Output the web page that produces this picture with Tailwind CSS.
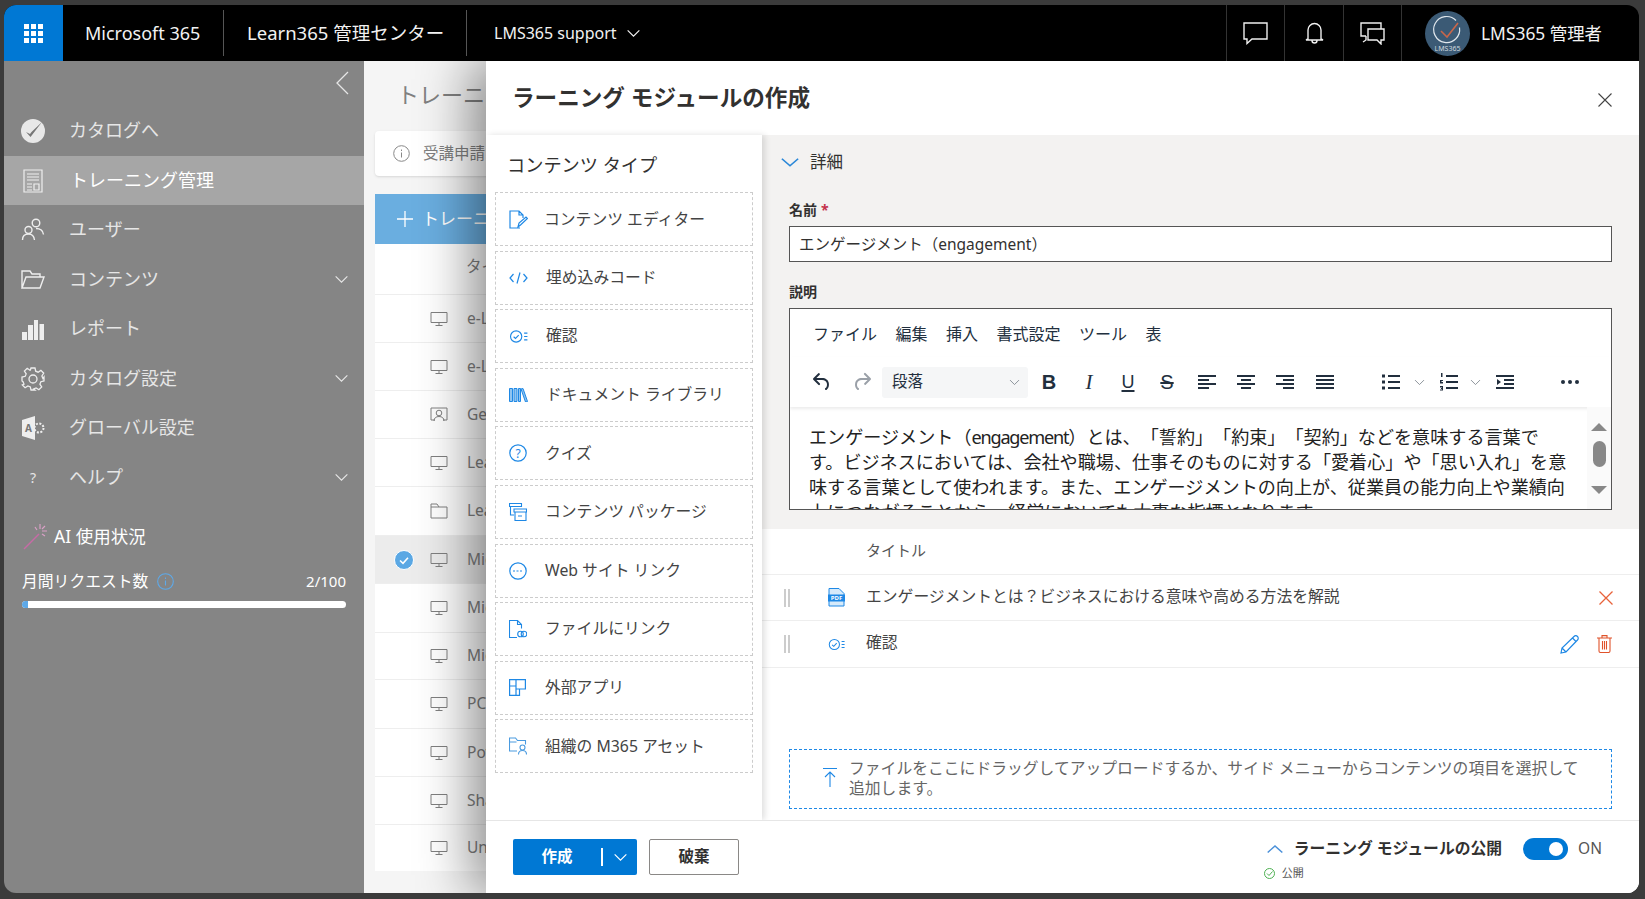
<!DOCTYPE html>
<html lang="ja" class="h-full">
<head>
    <meta charset="UTF-8">
    <meta name="viewport" content="width=device-width, initial-scale=1.0">
    <title>Learn365 管理センター</title>
    <script src="https://cdn.jsdelivr.net/npm/@tailwindcss/browser@4"></script>
</head>
<body class="h-screen overflow-hidden bg-[#3b3b3b] pt-[5px] pl-[4px] pr-[6px] pb-[6px] font-['Noto_Sans','Noto_Sans_CJK_JP',sans-serif] text-[#323130] [text-spacing-trim:space-all]">
    <svg class="hidden">
        <symbol id="monitor" viewBox="0 0 18 16"><path d="M1 1.500h16v10H1zM9 11.500v2.500M5.500 14.500h7" fill="none" stroke="currentColor"/></symbol>
        <symbol id="chev" viewBox="0 0 16 10"><path d="M1.500 1.500 8 8l6.500-6.500" fill="none" stroke="currentColor" stroke-width="1.300"/></symbol>
        <symbol id="checklist" viewBox="0 0 20 16"><circle cx="7.500" cy="8" r="6" fill="none" stroke="currentColor" stroke-width="1.200"/><path d="m4.800 8.300 2 1.800 3.400-3.600" fill="none" stroke="currentColor" stroke-width="1.200"/><path d="M16 4.500h3.500M16 8h3.500M16 11.500h3.500" stroke="currentColor" stroke-width="1.300"/></symbol>
    </svg>
    <div class="flex h-full flex-col overflow-hidden rounded-xl">
        <!-- Top bar -->
        <header class="flex h-14 shrink-0 items-center bg-black text-[#f2f2f2]">
            <div class="flex h-full w-[59px] items-center justify-center bg-[#0078d4]">
                <div class="grid grid-cols-3 gap-[2px]">
                    <i class="size-[5px] bg-white"></i><i class="size-[5px] bg-white"></i><i class="size-[5px] bg-white"></i>
                    <i class="size-[5px] bg-white"></i><i class="size-[5px] bg-white"></i><i class="size-[5px] bg-white"></i>
                    <i class="size-[5px] bg-white"></i><i class="size-[5px] bg-white"></i><i class="size-[5px] bg-white"></i>
                </div>
            </div>
            <div class="flex h-[46px] w-[161px] items-center border-r border-[#555] pl-[22px] text-[18px] whitespace-nowrap">Microsoft 365</div>
            <div class="flex h-[46px] w-[243px] items-center border-r border-[#555] pl-[23px] text-[18.500px] whitespace-nowrap">Learn365 管理センター</div>
            <div class="flex h-full w-[759px] items-center pl-[27px] text-[16px] whitespace-nowrap">LMS365 support<svg class="ml-[9px] h-[9px] w-[15px]"><use href="#chev"/></svg></div>
            <div class="flex h-full w-[58px] items-center justify-center border-l border-[#333]">
                <svg class="h-[23px] w-[25px]" viewBox="0 0 25 23" fill="none" stroke="#f0f0f0" stroke-width="1.400"><path d="M1 1h23v16H9l-5 4.500V17H1z"/></svg>
            </div>
            <div class="flex h-full w-[59px] items-center justify-center border-l border-[#333]">
                <svg class="h-[22px] w-[19px]" viewBox="0 0 19 22" fill="none" stroke="#f0f0f0" stroke-width="1.400"><path d="M3 17V8a6.500 6.500 0 0 1 13 0v9l2 1H1zM7 18.500a2.500 2.500 0 0 0 5 0"/></svg>
            </div>
            <div class="flex h-full w-[58px] items-center justify-center border-l border-[#333]">
                <svg class="h-[23px] w-[25px]" viewBox="0 0 25 23" fill="none" stroke="#f0f0f0" stroke-width="1.400"><path d="M6 14H1V1h20v6M8 7h16v11h-3v4l-4-4H8zM6 14v4l-3 2"/></svg>
            </div>
            <div class="flex h-full flex-1 items-center border-l border-[#333] pl-[23px] text-[17.400px] whitespace-nowrap">
                <svg class="mr-[11px] size-[45px] shrink-0" viewBox="0 0 45 45">
                    <circle cx="22.500" cy="22.500" r="22.500" fill="#3b5a75"/>
                    <path d="M31 9.500a13 13 0 1 0 3.500 7" fill="none" stroke="#dfe6ec" stroke-width="1.200"/>
                    <path d="m16 20 6 6 11-14" fill="none" stroke="#c8664a" stroke-width="1.600"/>
                    <text x="22.500" y="40" text-anchor="middle" font-size="7" fill="#cfd8df">LMS365</text>
                </svg>
                LMS365 管理者
            </div>
        </header>

        <div class="flex min-h-0 flex-1">
            <!-- Sidebar -->
            <aside class="flex w-[360px] shrink-0 flex-col bg-[#858585] text-[18px] text-[#e6e6e6]">
                <div class="flex h-[46px] shrink-0 justify-end pt-[10px] pr-[15px]">
                    <svg class="h-[24px] w-[14px]" viewBox="0 0 14 24" fill="none" stroke="#e6e6e6" stroke-width="1.300"><path d="M13 1 2 12l11 11"/></svg>
                </div>
                <div class="flex h-[49px] items-center pb-[2px] pl-[17px]">
                    <svg class="mr-[24px] size-[24px]" viewBox="0 0 24 24"><circle cx="12" cy="12" r="12" fill="#e8e8e8"/><path d="m5 13 4.500 5L21 3 10.500 13 9 15z" fill="#777"/></svg>カタログへ
                </div>
                <div class="flex h-[49px] items-center bg-[#a6a6a6] pl-[19px] text-white">
                    <svg class="mr-[27px] h-[24px] w-[20px]" viewBox="0 0 20 24" fill="none" stroke="#eee" stroke-width="1.200"><path d="M1 1h18v22H1zM4 5h12M4 8h12M4 11h12M4 15h5M4 18h5M4 21h5M11 15h5v6h-5z"/></svg>トレーニング管理
                </div>
                <div class="flex h-[50px] items-center pb-[2px] pl-[17px]">
                    <svg class="mr-[24px] size-[24px]" viewBox="0 0 24 24" fill="none" stroke="#eee" stroke-width="1.400"><circle cx="15" cy="6" r="3.800"/><circle cx="7.500" cy="13" r="3.500"/><path d="M1.500 23c0-4 2.500-6 6-6s5.500 2 6 6M15 11.500c4 0 7 2 7.500 6"/></svg>ユーザー
                </div>
                <div class="flex h-[49px] items-center pl-[17px]">
                    <svg class="mr-[24px] h-[20px] w-[24px]" viewBox="0 0 24 20" fill="none" stroke="#eee" stroke-width="1.400"><path d="M1 18V1h8l2 3h8v3M1 18h18l4-11H5z"/></svg>コンテンツ
                    <svg class="mr-[15px] ml-auto h-[9px] w-[15px]"><use href="#chev"/></svg>
                </div>
                <div class="flex h-[49px] items-center pl-[17px]">
                    <svg class="mr-[24px] size-[24px]" viewBox="0 0 24 24" fill="#eee"><path d="M1 15h5v8H1zM7 8h5v15H7zM13 3h4v20h-4zM18.500 7H23v16h-4.500z"/></svg>レポート
                </div>
                <div class="flex h-[49px] items-center pt-[2px] pl-[17px]">
                    <svg class="mr-[24px] size-[24px]" viewBox="0 0 24 24" fill="none" stroke="#eee" stroke-width="1.300"><circle cx="12" cy="12" r="4"/><path d="M10 1h4l.7 3.200 2.400 1 2.800-1.800 2.800 2.800-1.800 2.800 1 2.400L23 10v4l-3.100.7-1 2.400 1.800 2.800-2.800 2.800-2.800-1.800-2.400 1L14 23h-4l-.7-3.100-2.400-1-2.800 1.800-2.800-2.800L3 17.100l-1-2.400L1 14v-4l3.200-.7 1-2.400L3.400 4.100l2.800-2.800L9 3.200l.4-.2z"/></svg>カタログ設定
                    <svg class="mr-[15px] ml-auto h-[9px] w-[15px]"><use href="#chev"/></svg>
                </div>
                <div class="flex h-[49px] items-center pt-[2px] pl-[17px]">
                    <svg class="mr-[24px] size-[24px]" viewBox="0 0 24 24"><path d="M1 4 14 0v24L1 20z" fill="#eee"/><text x="7.500" y="16" text-anchor="middle" font-size="10" font-weight="700" fill="#777">A</text><circle cx="18" cy="12" r="4.500" fill="none" stroke="#eee" stroke-width="2" stroke-dasharray="2 1.500"/></svg>グローバル設定
                </div>
                <div class="flex h-[49px] items-center pt-[4px] pl-[17px]">
                    <span class="mr-[24px] w-[24px] text-center text-[14px]">?</span>ヘルプ
                    <svg class="mr-[15px] ml-auto h-[9px] w-[15px]"><use href="#chev"/></svg>
                </div>
                <div class="mt-[22px] flex h-[28px] items-center pl-[19px] text-[17.500px] text-white">
                    <svg class="mr-[5px] -ml-[1px] size-[27px] shrink-0" viewBox="0 0 27 27" fill="none"><path d="M2 26 17 11" stroke="#c76ba6" stroke-width="1.500"/><path d="M18 1v5M25 8h-5M23 3l-3 3M13 4l2 3M23 13l-3-2" stroke="#d9a0c6" stroke-width="1.200"/></svg>AI 使用状況
                </div>
                <div class="mt-[19px] flex items-center justify-between px-[18px] text-[15.800px] leading-[24px] text-white">
                    <span class="flex items-center">月間リクエスト数
                        <svg class="ml-[9px] size-[17px]" viewBox="0 0 17 17" fill="none" stroke="#5ea9e8" stroke-width="1.100"><circle cx="8.500" cy="8.500" r="7.800"/><path d="M8.500 7.500v5M8.500 4.500v1.500"/></svg>
                    </span>
                    <span class="text-[15px]">2/100</span>
                </div>
                <div class="mx-[18px] mt-[8px] h-[7px] overflow-hidden rounded-full bg-white">
                    <div class="h-full w-[2%] bg-[#5ea9e8]"></div>
                </div>
            </aside>

            <!-- Page behind the panel -->
            <main class="relative min-w-0 flex-1 overflow-hidden bg-[#f5f5f5] px-[11px] text-[#808080]">
                <div class="flex h-[70px] items-center pb-[4px] pl-[22px] text-[22px] whitespace-nowrap">トレーニング管理</div>
                <div class="flex h-[45px] items-center rounded bg-white pl-[18px] text-[15.500px] whitespace-nowrap shadow-sm">
                    <svg class="mr-[13px] size-[17px] shrink-0" viewBox="0 0 17 17" fill="none" stroke="#888"><circle cx="8.500" cy="8.500" r="7.800"/><path d="M8.500 7.500v5M8.500 4.500v1.500"/></svg>受講申請
                </div>
                <div class="mt-[18px] flex h-[50px] items-center bg-[#6aaee0] pl-[22px] text-[17px] whitespace-nowrap text-white">
                    <svg class="mr-[9px] size-[16px] shrink-0" viewBox="0 0 16 16" stroke="#fff" stroke-width="1.300"><path d="M8 0v16M0 8h16"/></svg>トレーニング
                </div>
                <div class="bg-white text-[15.500px] whitespace-nowrap">
                    <div class="flex h-[50px] items-center pb-[4px] pl-[91px]">タイプ</div>
                    <div class="flex h-[48px] items-center border-t border-[#eee] pl-[55px]"><svg class="mr-[19px] h-[16px] w-[18px] shrink-0"><use href="#monitor"/></svg>e-Learning</div>
                    <div class="flex h-[48px] items-center border-t border-[#eee] pl-[55px]"><svg class="mr-[19px] h-[16px] w-[18px] shrink-0"><use href="#monitor"/></svg>e-Learning</div>
                    <div class="flex h-[48px] items-center border-t border-[#eee] pl-[55px]">
                        <svg class="mr-[19px] h-[16px] w-[18px] shrink-0" viewBox="0 0 18 16" fill="none" stroke="currentColor"><path d="M4 1H1v12h4M13 13h4V1h-3M4 1h10"/><circle cx="9" cy="6" r="2.800"/><path d="M4 14c0-3 2-4.500 5-4.500s5 1.500 5 4.500"/></svg>General
                    </div>
                    <div class="flex h-[48px] items-center border-t border-[#eee] pl-[55px]"><svg class="mr-[19px] h-[16px] w-[18px] shrink-0"><use href="#monitor"/></svg>Learn365</div>
                    <div class="flex h-[49px] items-center border-t border-[#eee] pl-[55px]">
                        <svg class="mr-[19px] h-[16px] w-[18px] shrink-0" viewBox="0 0 18 16" fill="none" stroke="currentColor"><path d="M1 15V1h6l2 3h8v11zM1 4h8"/></svg>Learn365
                    </div>
                    <div class="relative flex h-[48px] items-center border-t border-[#eee] bg-[#ececec] pl-[55px]">
                        <svg class="absolute top-[14px] left-[19px] size-[20px]" viewBox="0 0 20 20"><circle cx="10" cy="10" r="9.500" fill="#5ba8e4" stroke="#fff"/><path d="m6 10.500 3 2.800 5-5.500" fill="none" stroke="#fff" stroke-width="1.600"/></svg>
                        <svg class="mr-[19px] h-[16px] w-[18px] shrink-0"><use href="#monitor"/></svg>Microsoft
                    </div>
                    <div class="flex h-[49px] items-center border-t border-[#eee] pl-[55px]"><svg class="mr-[19px] h-[16px] w-[18px] shrink-0"><use href="#monitor"/></svg>Microsoft</div>
                    <div class="flex h-[47px] items-center border-t border-[#eee] pl-[55px]"><svg class="mr-[19px] h-[16px] w-[18px] shrink-0"><use href="#monitor"/></svg>Microsoft</div>
                    <div class="flex h-[49px] items-center border-t border-[#eee] pl-[55px]"><svg class="mr-[19px] h-[16px] w-[18px] shrink-0"><use href="#monitor"/></svg>PC</div>
                    <div class="flex h-[48px] items-center border-t border-[#eee] pl-[55px]"><svg class="mr-[19px] h-[16px] w-[18px] shrink-0"><use href="#monitor"/></svg>Power</div>
                    <div class="flex h-[48px] items-center border-t border-[#eee] pl-[55px]"><svg class="mr-[19px] h-[16px] w-[18px] shrink-0"><use href="#monitor"/></svg>Share</div>
                    <div class="flex h-[47px] items-center border-t border-[#eee] pl-[55px]"><svg class="mr-[19px] h-[16px] w-[18px] shrink-0"><use href="#monitor"/></svg>Unit</div>
                </div>

                <!-- Slide-over panel -->
                <section class="absolute top-0 right-0 bottom-0 flex w-[1153px] flex-col bg-white text-[#323130] shadow-[-14px_0_50px_rgba(0,0,0,0.45)]">
                    <div class="flex h-[74px] shrink-0 items-start justify-between pt-[19px] pr-[27px] pl-[26px]">
                        <h1 class="text-[22.600px] leading-[36px] font-bold whitespace-nowrap">ラーニング モジュールの作成</h1>
                        <svg class="mt-[13px] size-[14px]" viewBox="0 0 14 14" stroke="#444" stroke-width="1.100"><path d="m0.500 0.500 13 13M13.500 0.500l-13 13"/></svg>
                    </div>
                    <div class="flex min-h-0 flex-1">
                        <!-- Content types -->
                        <div class="z-10 w-[276px] shrink-0 px-[9px] shadow-[3px_0_6px_rgba(0,0,0,0.12)]">
                            <div class="flex h-[57px] items-center pt-[4px] pl-[12px] text-[18.200px]">コンテンツ タイプ</div>
                            <div class="flex flex-col gap-[4.600px] text-[15.800px] text-[#444]">
                                <div class="flex h-[54px] items-center border border-dashed border-[#ccc] pl-[13px]">
                                    <svg class="mr-[16px] size-[19px] shrink-0" viewBox="0 0 19 19" fill="none" stroke="#1e88e5" stroke-width="1.200"><path d="M11 18H1V1h9l4 4v3M10 1v4h4M9 17l1-4 7-6 1.500 1.500-7 6.500z"/></svg><span class="pt-[1px]">コンテンツ エディター</span>
                                </div>
                                <div class="flex h-[54px] items-center border border-dashed border-[#ccc] pl-[13px]">
                                    <svg class="mr-[18px] h-[12px] w-[19px] shrink-0" viewBox="0 0 19 12" fill="none" stroke="#1e88e5" stroke-width="1.200"><path d="M4.500 2 1 6l3.500 4M14.500 2 18 6l-3.500 4M11 0.500 8 11.500"/></svg>埋め込みコード
                                </div>
                                <div class="flex h-[54px] items-center border border-dashed border-[#ccc] pl-[13px] text-[#1e88e5]">
                                    <svg class="mr-[18px] h-[15px] w-[19px] shrink-0"><use href="#checklist"/></svg><span class="text-[#444]">確認</span>
                                </div>
                                <div class="flex h-[54px] items-center border border-dashed border-[#ccc] pl-[13px]">
                                    <svg class="mr-[18px] h-[14px] w-[19px] shrink-0" viewBox="0 0 19 14" fill="#90c4f0" stroke="#1e88e5"><path d="M0.500 0.500h3v13h-3zM5 0.500h3v13H5zM9.500 0.500h2v13h-2zM12 1l2-.5 4.500 13-2 .5z"/></svg>ドキュメント ライブラリ
                                </div>
                                <div class="flex h-[54px] items-center border border-dashed border-[#ccc] pl-[13px]">
                                    <svg class="mr-[18px] size-[18px] shrink-0" viewBox="0 0 18 18"><circle cx="9" cy="9" r="8.200" fill="none" stroke="#1e88e5" stroke-width="1.200"/><text x="9" y="13.500" text-anchor="middle" font-size="12" fill="#1e88e5">?</text></svg>クイズ
                                </div>
                                <div class="flex h-[54px] items-center border border-dashed border-[#ccc] pl-[13px]">
                                    <svg class="mr-[18px] size-[18px] shrink-0" viewBox="0 0 18 18" fill="none" stroke="#1e88e5" stroke-width="1.100"><path d="M0.500 0.500h12v3h-12zM1.500 3.500V12H5M5 6h12.500v3H5zM6 9v8.500h11V9M9 13h4"/></svg>コンテンツ パッケージ
                                </div>
                                <div class="flex h-[54px] items-center border border-dashed border-[#ccc] pl-[13px]">
                                    <svg class="mr-[18px] size-[18px] shrink-0" viewBox="0 0 18 18" fill="none" stroke="#1e88e5" stroke-width="1.200"><circle cx="9" cy="9" r="8.200"/><path d="M4 9h10" stroke-dasharray="2 1.500"/></svg>Web サイト リンク
                                </div>
                                <div class="flex h-[54px] items-center border border-dashed border-[#ccc] pl-[13px]">
                                    <svg class="mr-[18px] size-[18px] shrink-0" viewBox="0 0 18 18" fill="none" stroke="#1e88e5" stroke-width="1.100"><path d="M8 17.500H0.500V0.500h8l4 4v4M8.500 0.500v4h4"/><circle cx="11.500" cy="14" r="2.800"/><circle cx="15" cy="14" r="2.800"/></svg>ファイルにリンク
                                </div>
                                <div class="flex h-[54px] items-center border border-dashed border-[#ccc] pl-[13px]">
                                    <svg class="mr-[19px] size-[17px] shrink-0" viewBox="0 0 17 17" fill="none" stroke="#1e88e5" stroke-width="1.200"><path d="M0.600 0.600h6.400v6.400H0.600zM7 0.600h9.400v9.400H7zM0.600 7h6.400v9.400H0.600zM7 10h3.500v6.400H7z"/></svg>外部アプリ
                                </div>
                                <div class="flex h-[54px] items-center border border-dashed border-[#ccc] pl-[13px]">
                                    <svg class="mr-[18px] size-[18px] shrink-0" viewBox="0 0 18 18" fill="none" stroke="#4a9be0" stroke-width="1.100"><path d="M8 14H0.500V1h6l2 2.500h8v4M0.500 5h7"/><circle cx="13.500" cy="10.500" r="2.500"/><path d="M9.500 17.500c0-2.500 1.500-4 4-4s4 1.500 4 4"/></svg>組織の M365 アセット
                                </div>
                            </div>
                        </div>

                        <!-- Details and items -->
                        <div class="flex min-w-0 flex-1 flex-col">
                            <div class="h-[394px] shrink-0 bg-[#f3f2f1] px-[27px]">
                                <div class="-ml-[9px] flex h-[54px] items-center text-[16.500px]">
                                    <svg class="mr-[10px] h-[11px] w-[20px] text-[#2b88d8]" viewBox="0 0 16 10" preserveAspectRatio="none"><use href="#chev"/></svg>詳細
                                </div>
                                <label class="flex h-[37px] items-start pt-[9px] text-[14px] leading-[24px] font-bold">名前<span class="ml-[4px] text-[#c4314b]">*</span></label>
                                <div class="flex h-[36px] items-center border border-[#555] bg-white px-[9px] pt-[1px] text-[15.500px] whitespace-nowrap">エンゲージメント（engagement）</div>
                                <label class="block h-[46px] pt-[18px] text-[14px] leading-[24px] font-bold">説明</label>
                                <div class="relative h-[202px] overflow-hidden border border-[#555] bg-white">
                                    <div class="flex h-[48px] items-end gap-[18.500px] pb-[11px] pl-[23px] text-[16px] leading-[24px] text-[#222f3e]">
                                        <span>ファイル</span><span>編集</span><span>挿入</span><span>書式設定</span><span>ツール</span><span>表</span>
                                    </div>
                                    <div class="flex h-[50px] items-center pl-[20px] text-[#222f3e] shadow-[0_2px_3px_rgba(0,0,0,0.08)]">
                                        <svg class="size-[24px] shrink-0" viewBox="0 0 24 24" fill="currentColor"><path d="M6.400 8H12c3.700 0 6.200 2 6.800 5.100.6 2.700-.4 5.600-2.300 6.800a1 1 0 0 1-1-1.800c1.100-.6 1.800-2.700 1.400-4.600-.5-2.100-2.100-3.500-4.900-3.500H6.400l3.300 3.300a1 1 0 1 1-1.400 1.400l-5-5a1 1 0 0 1 0-1.400l5-5a1 1 0 0 1 1.400 1.400L6.400 8Z"/></svg>
                                        <svg class="ml-[16px] size-[24px] shrink-0 text-[#9aa0a8]" viewBox="0 0 24 24" fill="currentColor"><path d="M17.600 10H12c-2.800 0-4.400 1.400-4.900 3.500-.4 2 .3 4 1.400 4.600a1 1 0 1 1-1 1.800c-2-1.200-2.900-4.100-2.300-6.800.6-3 3-5.100 6.800-5.100h5.600l-3.300-3.300a1 1 0 1 1 1.400-1.400l5 5a1 1 0 0 1 0 1.400l-5 5a1 1 0 0 1-1.400-1.400l3.300-3.300Z"/></svg>
                                        <div class="ml-[8px] flex h-[31px] w-[146px] shrink-0 items-center justify-between rounded-[3px] bg-[#f5f6f7] pr-[8px] pl-[10px] text-[15.500px]">段落<svg class="h-[7px] w-[11px] text-[#808890]" viewBox="0 0 16 10"><use href="#chev"/></svg></div>
                                        <span class="ml-[13px] w-[16px] text-center font-['Liberation_Sans'] text-[20px] leading-none font-bold">B</span>
                                        <span class="ml-[24px] w-[16px] text-center font-['Liberation_Serif'] text-[21px] leading-none italic">I</span>
                                        <span class="ml-[23px] w-[16px] text-center font-['Liberation_Sans'] text-[18px] leading-none underline decoration-2 underline-offset-2">U</span>
                                        <span class="ml-[23px] w-[16px] text-center font-['Liberation_Sans'] text-[20px] leading-none line-through">S</span>
                                        <svg class="ml-[22px] size-[20px] shrink-0" viewBox="0 0 20 20" fill="currentColor"><path d="M1 3h18v2H1zM1 7h11v2H1zM1 11h18v2H1zM1 15h11v2H1z"/></svg>
                                        <svg class="ml-[19px] size-[20px] shrink-0" viewBox="0 0 20 20" fill="currentColor"><path d="M1 3h18v2H1zM5 7h10v2H5zM1 11h18v2H1zM5 15h10v2H5z"/></svg>
                                        <svg class="ml-[19px] size-[20px] shrink-0" viewBox="0 0 20 20" fill="currentColor"><path d="M1 3h18v2H1zM8 7h11v2H8zM1 11h18v2H1zM8 15h11v2H8z"/></svg>
                                        <svg class="ml-[20px] size-[20px] shrink-0" viewBox="0 0 20 20" fill="currentColor"><path d="M1 3h18v2H1zM1 7h18v2H1zM1 11h18v2H1zM1 15h18v2H1z"/></svg>
                                        <svg class="ml-[46px] size-[20px] shrink-0" viewBox="0 0 20 20" fill="currentColor"><path d="M7 3h12v2H7zM7 9h12v2H7zM7 15h12v2H7zM1 2.500h3v3H1zM1 8.500h3v3H1zM1 14.500h3v3H1z"/></svg>
                                        <svg class="ml-[13px] h-[7px] w-[11px] shrink-0 text-[#808890]" viewBox="0 0 16 10"><use href="#chev"/></svg>
                                        <svg class="ml-[14px] size-[20px] shrink-0" viewBox="0 0 20 20" fill="currentColor"><path d="M7 3h12v2H7zM7 9h12v2H7zM7 15h12v2H7zM2 1h1.500v4H2zM1 8h3v1H2.500v1H4v1.500H1zM1 14h3v4.500H1V17.500h2V17H2v-1h1v-.5H1z"/></svg>
                                        <svg class="ml-[11px] h-[7px] w-[11px] shrink-0 text-[#808890]" viewBox="0 0 16 10"><use href="#chev"/></svg>
                                        <svg class="ml-[14px] size-[20px] shrink-0" viewBox="0 0 20 20" fill="currentColor"><path d="M1 3h18v2H1zM9 7h10v2H9zM9 11h10v2H9zM1 15h18v2H1zM2 7l4 3-4 3z"/></svg>
                                        <svg class="ml-[46px] h-[4px] w-[18px] shrink-0" viewBox="0 0 18 4" fill="currentColor"><circle cx="2" cy="2" r="2"/><circle cx="9" cy="2" r="2"/><circle cx="16" cy="2" r="2"/></svg>
                                    </div>
                                    <div class="flex h-[102px]">
                                        <div class="min-w-0 flex-1 pt-[18px] pl-[19px] text-[18.100px] leading-[25px] whitespace-nowrap text-[#222]">
                                            エンゲージメント（<span class="tracking-[-1.200px]">engagement</span>）とは、「誓約」「約束」「契約」などを意味する言葉で<br>
                                            す。ビジネスにおいては、会社や職場、仕事そのものに対する「愛着心」や「思い入れ」を意<br>
                                            味する言葉として使われます。また、エンゲージメントの向上が、従業員の能力向上や業績向<br>
                                            上につながることから、経営においても大事な指標となります。
                                        </div>
                                        <div class="flex w-[24px] shrink-0 flex-col items-center bg-[#fafafa] pt-[16px]">
                                            <i class="h-0 w-0 border-x-[8px] border-b-[8px] border-x-transparent border-b-[#888]"></i>
                                            <i class="mt-[10px] h-[26px] w-[13px] rounded-full bg-[#888]"></i>
                                            <i class="mt-[19px] h-0 w-0 border-x-[8px] border-t-[8px] border-x-transparent border-t-[#888]"></i>
                                        </div>
                                    </div>
                                </div>
                            </div>

                            <div class="flex h-[46px] shrink-0 items-center border-b border-[#eee] pb-[2px] pl-[104px] text-[15px] text-[#555]">タイトル</div>
                            <div class="flex h-[46px] shrink-0 items-center border-b border-[#eee] pr-[26px] pl-[22px]">
                                <span class="mr-[38px] h-[18px] w-[6px] border-x-2 border-[#ccc]"></span>
                                <svg class="mr-[21px] h-[19px] w-[17px] shrink-0" viewBox="0 0 17 19"><path d="M1 0.500h10l5 5V18H1z" fill="#d6eafa" stroke="#1e88e5"/><rect x="0" y="6.500" width="17" height="7" fill="#1e88e5"/><text x="8.500" y="12.300" text-anchor="middle" font-size="6" font-weight="700" fill="#fff">PDF</text></svg>
                                <span class="flex-1 pb-[2px] text-[15.800px] whitespace-nowrap text-[#444]">エンゲージメントとは？ビジネスにおける意味や高める方法を解説</span>
                                <svg class="size-[14px]" viewBox="0 0 14 14" stroke="#e8623a" stroke-width="1.300"><path d="m0.500 0.500 13 13M13.500 0.500l-13 13"/></svg>
                            </div>
                            <div class="flex h-[47px] shrink-0 items-center border-b border-[#eee] pr-[27px] pl-[22px] text-[#1e88e5]">
                                <span class="mr-[38px] h-[18px] w-[6px] border-x-2 border-[#ccc]"></span>
                                <svg class="mr-[21px] h-[15px] w-[17px] shrink-0"><use href="#checklist"/></svg>
                                <span class="flex-1 pb-[2px] text-[15.800px] text-[#444]">確認</span>
                                <svg class="mr-[18px] size-[19px]" viewBox="0 0 19 19" fill="none" stroke="#1e88e5" stroke-width="1.200"><path d="m1 18 1-5L14 1.500a2 2 0 0 1 3.500 3.500L6 17zM2 13l4 4M12.500 3l3.500 3.500"/></svg>
                                <svg class="h-[18px] w-[15px]" viewBox="0 0 15 18" fill="none" stroke="#e0532b" stroke-width="1.100"><path d="M0 3h15M5 3V0.600h5V3M2 3v13a1.500 1.500 0 0 0 1.500 1.500h8A1.500 1.500 0 0 0 13 16V3M5.500 6v8.500M7.500 6v8.500M9.500 6v8.500"/></svg>
                            </div>
                            <div class="mx-[27px] mt-[81px] flex h-[60px] items-center border border-dashed border-[#1e88e5] pb-[3px] pl-[33px] text-[15.800px] leading-[20px] text-[#666]">
                                <svg class="mr-[12px] h-[19px] w-[14px] shrink-0" viewBox="0 0 14 19" fill="none" stroke="#1e88e5" stroke-width="1.100"><path d="M0 0.500h14M7 4v15M2 9l5-5 5 5"/></svg>
                                <span>ファイルをここにドラッグしてアップロードするか、サイド メニューからコンテンツの項目を選択して<br>追加します。</span>
                            </div>
                        </div>
                    </div>

                    <!-- Footer -->
                    <footer class="z-20 flex h-[73px] shrink-0 items-start border-t border-[#e6e6e6] bg-white pt-[18px] pr-[37px] pl-[27px]">
                        <button class="flex h-[36px] w-[124px] items-center rounded-[2px] bg-[#0078d4] text-[15.500px] font-bold text-white">
                            <span class="w-[88px] text-center">作成</span>
                            <span class="h-[18px] w-[2px] bg-white"></span>
                            <svg class="ml-[10px] h-[9px] w-[15px]"><use href="#chev"/></svg>
                        </button>
                        <button class="ml-[12px] h-[36px] w-[90px] rounded-[2px] border border-[#8a8886] bg-white text-[15.500px] font-bold">破棄</button>
                        <div class="-mt-[2px] ml-auto flex flex-col">
                            <div class="flex h-[23px] items-center whitespace-nowrap">
                                <svg class="mr-[10px] h-[10px] w-[18px] text-[#4a90d9]" viewBox="0 0 16 10" preserveAspectRatio="none" style="transform: scaleY(-1)"><use href="#chev"/></svg>
                                <span class="text-[15.800px] font-bold">ラーニング モジュールの公開</span>
                                <span class="relative ml-[21px] h-[22px] w-[45px] rounded-full bg-[#0078d4]"><i class="absolute top-[4px] right-[5px] size-[14px] rounded-full bg-white"></i></span>
                                <span class="ml-[10px] text-[15.500px] text-[#555]">ON</span>
                            </div>
                            <div class="mt-[5px] -ml-[2px] flex h-[16px] items-center text-[11px] text-[#555]">
                                <svg class="mr-[7px] size-[11px]" viewBox="0 0 11 11" fill="none" stroke="#4caf50"><circle cx="5.500" cy="5.500" r="5"/><path d="m3 5.500 2 2 3.500-4"/></svg>公開
                            </div>
                        </div>
                    </footer>
                </section>
            </main>
        </div>
    </div>
</body>
</html>
